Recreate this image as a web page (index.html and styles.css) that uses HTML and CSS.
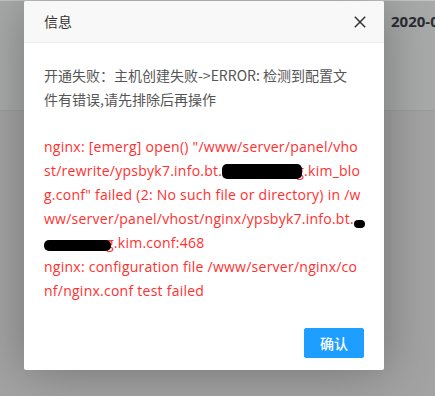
FILE: index.html
```html
<!DOCTYPE html>
<html lang="zh-CN">
<head>
<meta charset="utf-8">
<title>信息</title>
<link rel="stylesheet" href="styles.css">
</head>
<body>
<div class="page">
  <div class="page-top">
    <span class="page-date">2020-0</span>
  </div>
  <div class="page-rest"></div>
</div>
<div class="layer">
  <div class="layer-title">
    <span class="title-text">信息</span>
    <span class="layer-close" aria-label="关闭">
      <svg width="12" height="12" viewBox="0 0 12 12"><path d="M0.8 0.8 L11.2 11.2 M11.2 0.8 L0.8 11.2" stroke="#333" stroke-width="1.5" fill="none"/></svg>
    </span>
  </div>
  <div class="layer-content">
    <div class="msg">
      <div class="ln">开通失败：主机创建失败-&gt;ERROR: 检测到配置文</div>
      <div class="ln">件有错误,请先排除后再操作</div>
      <div class="ln blank"></div>
    </div>
    <div class="err">
      <div class="ln">nginx: [emerg] open() "/www/server/panel/vho</div>
      <div class="ln">st/rewrite/ypsbyk7.info.bt.<span class="redact r1"></span>g.kim_blo</div>
      <div class="ln">g.conf" failed (2: No such file or directory) in /w</div>
      <div class="ln">ww/server/panel/vhost/nginx/ypsbyk7.info.bt.<span class="redact r2"></span></div>
      <div class="ln"><span class="redact r3"></span>g.kim.conf:468</div>
      <div class="ln">nginx: configuration file /www/server/nginx/co</div>
      <div class="ln">nf/nginx.conf test failed</div>
    </div>
  </div>
  <div class="layer-btns">
    <a class="btn-ok">确认</a>
  </div>
</div>
</body>
</html>
```

FILE: styles.css
```css
html, body {
  margin: 0;
  padding: 0;
}
body {
  width: 435px;
  height: 396px;
  overflow: hidden;
  background: #a3a3a4;
  font-family: "Open Sans", "Noto Sans CJK SC", sans-serif;
  position: relative;
}
.page {
  display: flex;
  flex-direction: column;
  height: 396px;
}
.page-top {
  height: 109px;
  background: #a8a9a9;
  border-top: 1px solid #c4c4c4;
  border-bottom: 1px solid #9c9c9d;
  padding-left: 391px;
  overflow: hidden;
}
.page-date {
  display: block;
  margin-top: 10px;
  font-family: "Open Sans", sans-serif;
  font-weight: 700;
  font-size: 15px;
  color: #2a2d34;
  white-space: nowrap;
}
.page-rest {
  flex: 1;
  background: #a3a3a4;
}
.layer {
  position: absolute;
  left: 24px;
  top: 1px;
  width: 360px;
  background: #fff;
  border-radius: 2px;
  box-shadow: 1px 1px 50px rgba(0, 0, 0, 0.3);
}
.layer-title {
  height: 41px;
  line-height: 41px;
  background: #f8f8f8;
  border-bottom: 1px solid #eee;
  padding: 0 18px 0 20px;
  display: flex;
  justify-content: space-between;
  align-items: center;
  border-radius: 2px 2px 0 0;
}
.title-text {
  font-family: "Noto Sans CJK SC", sans-serif;
  font-size: 14px;
  color: #333;
}
.layer-close {
  display: flex;
  width: 12px;
  height: 12px;
  margin-top: 1px;
}
.layer-content {
  padding: 20px;
  font-size: 14px;
  line-height: 24px;
}
.ln {
  white-space: nowrap;
  height: 24px;
}
.msg {
  color: #555;
  font-family: "Noto Sans CJK SC", sans-serif;
}
.err {
  color: #ff3030;
  letter-spacing: 0.25px;
}
.redact {
  display: inline-block;
  background: #000;
  border-radius: 5px;
  position: relative;
  z-index: 1;
}
.r1 {
  width: 80px;
  height: 15px;
  vertical-align: -3px;
  margin-right: -6px;
}
.r2 {
  width: 11px;
  height: 8px;
  vertical-align: -4px;
}
.r3 {
  width: 67px;
  height: 11px;
  vertical-align: -3px;
  margin-right: -5px;
}
.layer-btns {
  padding: 0 15px 12px;
  display: flex;
  justify-content: flex-end;
}
.btn-ok {
  height: 28px;
  line-height: 28px;
  margin: 5px 5px 0;
  padding: 0 15px;
  border: 1px solid #1e9fff;
  background: #1e9fff;
  color: #fff;
  border-radius: 2px;
  font-family: "Noto Sans CJK SC", sans-serif;
  font-size: 14px;
  font-weight: 500;
}
```
